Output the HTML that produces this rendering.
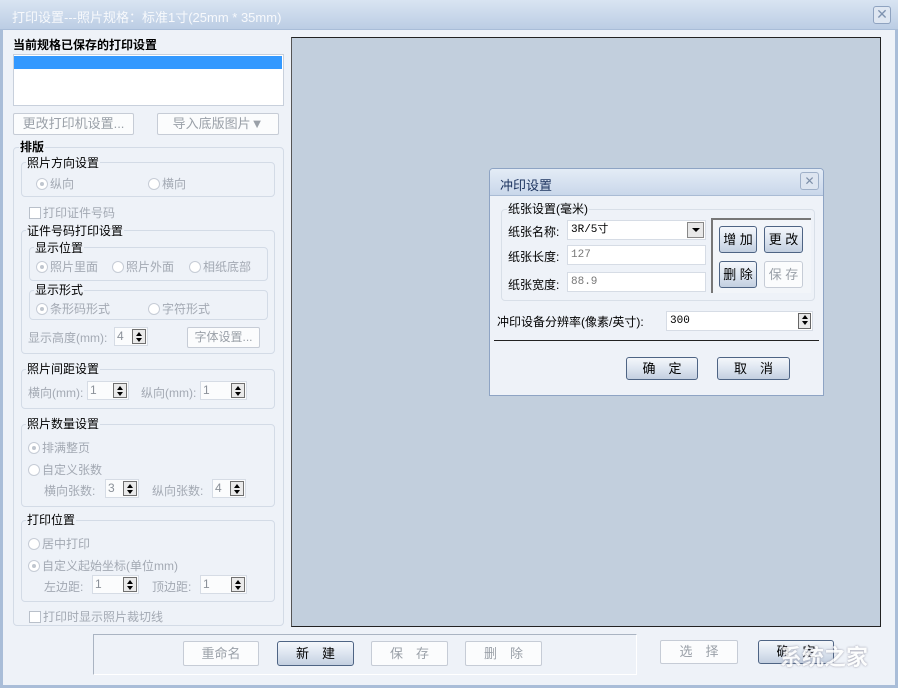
<!DOCTYPE html>
<html><head><meta charset="utf-8"><style>
*{box-sizing:border-box;margin:0;padding:0}
body{width:898px;height:688px;overflow:hidden;background:#eef2f8;font-family:"Liberation Sans","Noto Sans CJK SC","WenQuanYi Zen Hei",sans-serif;font-size:12px;color:#000;position:relative}
.a{position:absolute;white-space:nowrap}
.grp{position:absolute;border:1px solid #d3dbe6;border-radius:4px}
.lbl{position:absolute;background:#eef2f8;padding:0 1px;line-height:14px;white-space:nowrap}
.dis{color:#a3a9b3}
.btn{position:absolute;border:1px solid #c6ccd6;background:#fbfcfd;color:#9aa0a8;text-align:center;font-size:13px;border-radius:2px}
.btn2{position:absolute;border:1px solid #4e6484;background:linear-gradient(#f4f7fb,#dde5f0 50%,#c3cfe0);color:#000;text-align:center;font-size:13px;border-radius:3px}
.rad{display:inline-block;width:12px;height:12px;border-radius:50%;border:1px solid #c6ccd6;background:#fff;vertical-align:-2px;margin-right:2px;position:relative}
.rad.on:after{content:"";position:absolute;left:3px;top:3px;width:4px;height:4px;border-radius:50%;background:#c0c6cf}
.chk{display:inline-block;width:12px;height:12px;border:1px solid #b9c0ca;background:#fff;vertical-align:-2px;margin-right:2px}
.spin{position:absolute;border:1px solid #d6dce5;background:#fbfcfd;height:19px;color:#8b9199;padding-left:2px;line-height:17px}
.spin i{position:absolute;right:1px;top:1px;width:14px;height:15px;border:1px solid #707070;background:#eaeaea}
.spin i:before{content:"";position:absolute;left:3px;top:2px;border:3px solid transparent;border-bottom:4px solid #000;border-top:0}
.spin i:after{content:"";position:absolute;left:3px;top:8px;border:3px solid transparent;border-top:4px solid #000;border-bottom:0}
.inp{position:absolute;border:1px solid #d6dce5;background:#fff;height:20px;line-height:18px;padding-left:3px;font-family:"Liberation Mono","Noto Sans CJK SC",monospace;font-size:11px;color:#777}
</style></head><body>
<div class="a" style="left:0;top:0;width:898px;height:688px;border:3px solid #a9bdd8;border-top:0"></div>
<div class="a" style="left:0;top:0;width:898px;height:30px;background:linear-gradient(#d9e4f2,#bccde4);border-bottom:1px solid #a9bdd8"></div>
<div class="a" style="left:12px;top:7px;color:#f7f9fc;font-size:13px">打印设置---照片规格：标准1寸(25mm * 35mm)</div>
<div class="a" style="left:873px;top:6px;width:18px;height:18px;border:1px solid #8fa3c0;border-radius:3px;background:#dfe7f2;color:#7f93b0;text-align:center;line-height:15px;font-size:14px">✕</div>

<div class="a" style="left:13px;top:36px;font-weight:bold;font-size:12px">当前规格已保存的打印设置</div>
<div class="a" style="left:13px;top:54px;width:271px;height:52px;border:1px solid #c8d0dc;background:#fff"></div>
<div class="a" style="left:14px;top:56px;width:268px;height:13px;background:#3399ff"></div>
<div class="btn" style="left:13px;top:113px;width:121px;height:22px;line-height:20px">更改打印机设置...</div>
<div class="btn" style="left:157px;top:113px;width:122px;height:22px;line-height:20px">导入底版图片▼</div>

<div class="grp" style="left:13px;top:147px;width:271px;height:479px"></div>
<div class="lbl" style="left:19px;top:140px;font-weight:bold">排版</div>

<div class="grp" style="left:21px;top:162px;width:254px;height:35px"></div>
<div class="lbl" style="left:26px;top:156px">照片方向设置</div>
<div class="a dis" style="left:36px;top:175px"><span class="rad on"></span>纵向</div>
<div class="a dis" style="left:148px;top:175px"><span class="rad"></span>横向</div>
<div class="a dis" style="left:29px;top:204px"><span class="chk"></span>打印证件号码</div>

<div class="grp" style="left:21px;top:230px;width:254px;height:124px"></div>
<div class="lbl" style="left:26px;top:224px">证件号码打印设置</div>
<div class="grp" style="left:29px;top:247px;width:239px;height:34px"></div>
<div class="lbl" style="left:34px;top:241px">显示位置</div>
<div class="a dis" style="left:36px;top:258px"><span class="rad on"></span>照片里面</div>
<div class="a dis" style="left:112px;top:258px"><span class="rad"></span>照片外面</div>
<div class="a dis" style="left:189px;top:258px"><span class="rad"></span>相纸底部</div>
<div class="grp" style="left:29px;top:290px;width:239px;height:30px"></div>
<div class="lbl" style="left:34px;top:283px">显示形式</div>
<div class="a dis" style="left:36px;top:300px"><span class="rad on"></span>条形码形式</div>
<div class="a dis" style="left:148px;top:300px"><span class="rad"></span>字符形式</div>
<div class="a dis" style="left:28px;top:329px">显示高度(mm):</div>
<div class="spin" style="left:114px;top:327px;width:34px">4<i></i></div>
<div class="btn" style="left:187px;top:327px;width:73px;height:21px;line-height:19px;font-size:12px">字体设置...</div>

<div class="grp" style="left:21px;top:369px;width:254px;height:40px"></div>
<div class="lbl" style="left:26px;top:362px">照片间距设置</div>
<div class="a dis" style="left:28px;top:384px">横向(mm):</div>
<div class="spin" style="left:87px;top:381px;width:42px">1<i></i></div>
<div class="a dis" style="left:141px;top:384px">纵向(mm):</div>
<div class="spin" style="left:200px;top:381px;width:47px">1<i></i></div>

<div class="grp" style="left:21px;top:424px;width:254px;height:83px"></div>
<div class="lbl" style="left:26px;top:417px">照片数量设置</div>
<div class="a dis" style="left:28px;top:439px"><span class="rad on"></span>排满整页</div>
<div class="a dis" style="left:28px;top:461px"><span class="rad"></span>自定义张数</div>
<div class="a dis" style="left:44px;top:482px">横向张数:</div>
<div class="spin" style="left:105px;top:479px;width:34px">3<i></i></div>
<div class="a dis" style="left:152px;top:482px">纵向张数:</div>
<div class="spin" style="left:212px;top:479px;width:34px">4<i></i></div>

<div class="grp" style="left:21px;top:520px;width:254px;height:82px"></div>
<div class="lbl" style="left:26px;top:513px">打印位置</div>
<div class="a dis" style="left:28px;top:535px"><span class="rad"></span>居中打印</div>
<div class="a dis" style="left:28px;top:557px"><span class="rad on"></span>自定义起始坐标(单位mm)</div>
<div class="a dis" style="left:44px;top:578px">左边距:</div>
<div class="spin" style="left:92px;top:575px;width:47px">1<i></i></div>
<div class="a dis" style="left:152px;top:578px">顶边距:</div>
<div class="spin" style="left:200px;top:575px;width:47px">1<i></i></div>
<div class="a dis" style="left:29px;top:608px"><span class="chk"></span>打印时显示照片裁切线</div>

<div class="a" style="left:291px;top:37px;width:590px;height:590px;border:1px solid #222;border-left-color:#555;background:#c2cfdd"></div>

<div class="a" style="left:93px;top:634px;width:544px;height:41px;border:1px solid #aab4c2;border-bottom-color:#fff;border-right-color:#fff"></div>
<div class="btn" style="left:183px;top:641px;width:76px;height:25px;line-height:23px">重命名</div>
<div class="btn2" style="left:277px;top:641px;width:77px;height:25px;line-height:23px">新　建</div>
<div class="btn" style="left:371px;top:641px;width:77px;height:25px;line-height:23px">保　存</div>
<div class="btn" style="left:465px;top:641px;width:77px;height:25px;line-height:23px">删　除</div>
<div class="btn" style="left:660px;top:640px;width:78px;height:24px;line-height:22px">选　择</div>
<div class="btn2" style="left:758px;top:640px;width:76px;height:24px;line-height:22px">确　定</div>
<div class="a" style="left:780px;top:640px;color:#fff;font-size:22px;font-weight:bold;opacity:.85;text-shadow:0 0 2px #889">系统之家</div>

<div class="a" style="left:489px;top:168px;width:335px;height:228px;border:1px solid #8ea4c4;border-radius:4px 4px 0 0;background:#eef2f8"></div>
<div class="a" style="left:490px;top:169px;width:333px;height:27px;background:linear-gradient(#e4ecf6,#c9d7ea);border-radius:3px 3px 0 0;border-bottom:1px solid #a9bbd4"></div>
<div class="a" style="left:500px;top:175px;color:#1e3560;font-size:13px">冲印设置</div>
<div class="a" style="left:800px;top:172px;width:19px;height:18px;border:1px solid #9fb0c8;border-radius:3px;background:#dde5f0;color:#7d8fa8;text-align:center;line-height:16px">✕</div>
<div class="grp" style="left:501px;top:209px;width:314px;height:92px;border-color:#d8dfe8"></div>
<div class="lbl" style="left:507px;top:202px">纸张设置(毫米)</div>
<div class="a" style="left:508px;top:223px">纸张名称:</div>
<div class="a" style="left:508px;top:248px">纸张长度:</div>
<div class="a" style="left:508px;top:276px">纸张宽度:</div>
<div class="inp" style="left:567px;top:220px;width:139px;color:#000">3R/5寸<span style="position:absolute;right:1px;top:1px;width:17px;height:16px;border:1px solid #888;background:#e8e8e8"></span><span style="position:absolute;right:5px;top:7px;border:4px solid transparent;border-top:4px solid #000"></span></div>
<div class="inp" style="left:567px;top:245px;width:139px">127</div>
<div class="inp" style="left:567px;top:272px;width:139px">88.9</div>
<div class="a" style="left:711px;top:218px;width:100px;height:75px;border-top:2px solid #777;border-left:2px solid #777;background:#f2f5f9"></div>
<div class="btn2" style="left:719px;top:226px;width:38px;height:27px;line-height:25px">增 加</div>
<div class="btn2" style="left:764px;top:226px;width:39px;height:27px;line-height:25px">更 改</div>
<div class="btn2" style="left:719px;top:261px;width:38px;height:27px;line-height:25px">删 除</div>
<div class="btn" style="left:764px;top:261px;width:39px;height:27px;line-height:25px;border-radius:3px">保 存</div>
<div class="a" style="left:497px;top:313px">冲印设备分辨率(像素/英寸):</div>
<div class="inp" style="left:666px;top:311px;width:147px;color:#000">300<span style="position:absolute;right:1px;top:1px;width:13px;height:16px;border:1px solid #666;background:#e8e8e8"></span><span style="position:absolute;right:4px;top:3px;border:3px solid transparent;border-bottom:4px solid #000;border-top:0"></span><span style="position:absolute;right:4px;top:9px;border:3px solid transparent;border-top:4px solid #000;border-bottom:0"></span></div>
<div class="a" style="left:494px;top:340px;width:325px;height:1px;background:#222"></div>
<div class="btn2" style="left:626px;top:357px;width:72px;height:23px;line-height:21px">确　定</div>
<div class="btn2" style="left:717px;top:357px;width:73px;height:23px;line-height:21px">取　消</div>
</body></html>
